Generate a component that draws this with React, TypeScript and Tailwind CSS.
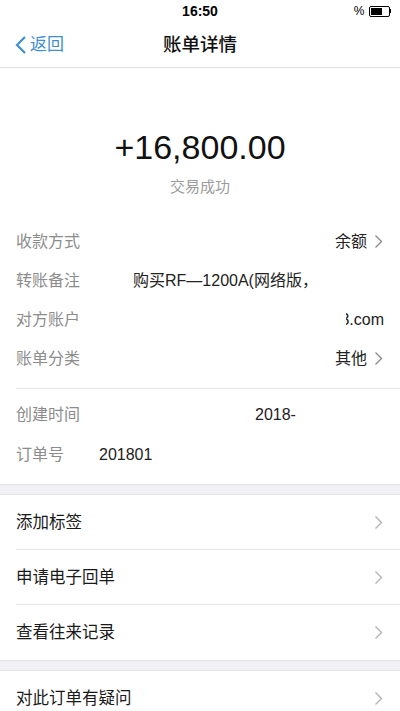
import React from 'react';

const font = { fontFamily: '"Liberation Sans", "Noto Sans CJK SC", sans-serif' };

const Chevron = ({ className = '' }: { className?: string }) => (
  <svg width="9" height="15" viewBox="0 0 9 15" className={className} fill="none">
    <polyline points="1.5,1.5 7.5,7.5 1.5,13.5" stroke="currentColor" strokeWidth="1.4" />
  </svg>
);

const InfoRow = ({ label, children, h = 'h-[39px]' }: { label: string; children?: React.ReactNode; h?: string }) => (
  <div className={`flex items-center px-4 ${h}`}>
    <span className="w-[117px] shrink-0 text-[16px] text-[#8c8c8c]">{label}</span>
    <div className="flex flex-1 items-center text-[16px] text-[#222]">{children}</div>
  </div>
);

const ActionRow = ({ label, border = true }: { label: string; border?: boolean }) => (
  <div className="pl-4">
    <div className={`flex h-[55px] items-center pr-[17px] ${border ? 'border-b border-[#e6e6e6]' : ''}`}>
      <span className="flex-1 text-[16.5px] text-[#1a1a1a]">{label}</span>
      <Chevron className="text-[#b4b4b8]" />
    </div>
  </div>
);

const Band = () => <div className="h-[11px] border-y border-[#e3e3e8] bg-[#f2f2f6]" />;

export default function App() {
  return (
    <div className="h-[711px] w-[400px] overflow-hidden bg-white" style={font}>
      {/* status bar */}
      <div className="relative flex h-[22px] items-center justify-center">
        <span className="text-[14px] font-semibold text-black">16:50</span>
        <div className="absolute right-[9px] top-[5px] flex items-center gap-[4px]">
          <span className="text-[12px] leading-none text-black">%</span>
          <div className="flex items-center">
            <div className="flex h-[11px] w-[21px] items-center rounded-[2px] border border-black p-[1px]">
              <div className="h-full w-[11px] bg-black" />
            </div>
            <div className="h-[4px] w-[1.5px] bg-black" />
          </div>
        </div>
      </div>

      {/* nav bar */}
      <div className="relative flex h-[46px] items-center justify-center border-b border-[#e2e2e2]">
        <div className="absolute left-[15px] flex items-center gap-[3px] text-[#3f8fcd]">
          <svg width="12" height="20" viewBox="0 0 12 20" fill="none">
            <polyline points="10,2 2,10 10,18" stroke="currentColor" strokeWidth="2.2" />
          </svg>
          <span className="text-[17px]">返回</span>
        </div>
        <span className="text-[18.5px] font-medium text-[#111]">账单详情</span>
      </div>

      {/* amount */}
      <div className="flex h-[154px] flex-col items-center pt-[58px]">
        <span className="text-[34px] leading-[42px] text-[#111]">+16,800.00</span>
        <span className="mt-[8px] text-[15px] text-[#9b9b9b]">交易成功</span>
      </div>

      <InfoRow label="收款方式">
        <span className="ml-auto">余额</span>
        <Chevron className="ml-[7px] mr-px text-[#8c8c8c]" />
      </InfoRow>
      <InfoRow label="转账备注">
        <span>购买RF—1200A(网络版，</span>
      </InfoRow>
      <InfoRow label="对方账户">
        <div className="ml-auto flex w-[38px] justify-end overflow-hidden">
          <span className="shrink-0">3.com</span>
        </div>
      </InfoRow>
      <InfoRow label="账单分类">
        <span className="ml-auto">其他</span>
        <Chevron className="ml-[7px] mr-px text-[#8c8c8c]" />
      </InfoRow>

      <div className="mt-[10px] ml-4 border-t border-[#e6e6e6]" />
      <div className="pt-[6px] pb-[9px]">
        <div className="flex h-[40px] items-center px-4">
          <span className="w-[239px] shrink-0 text-[16px] text-[#8c8c8c]">创建时间</span>
          <span className="text-[16px] text-[#222]">2018-</span>
        </div>
        <div className="flex h-[40px] items-center px-4">
          <span className="w-[83px] shrink-0 text-[16px] text-[#8c8c8c]">订单号</span>
          <span className="text-[16px] text-[#222]">201801</span>
        </div>
      </div>

      <Band />
      <ActionRow label="添加标签" />
      <ActionRow label="申请电子回单" />
      <ActionRow label="查看往来记录" border={false} />
      <Band />
      <ActionRow label="对此订单有疑问" border={false} />
    </div>
  );
}
